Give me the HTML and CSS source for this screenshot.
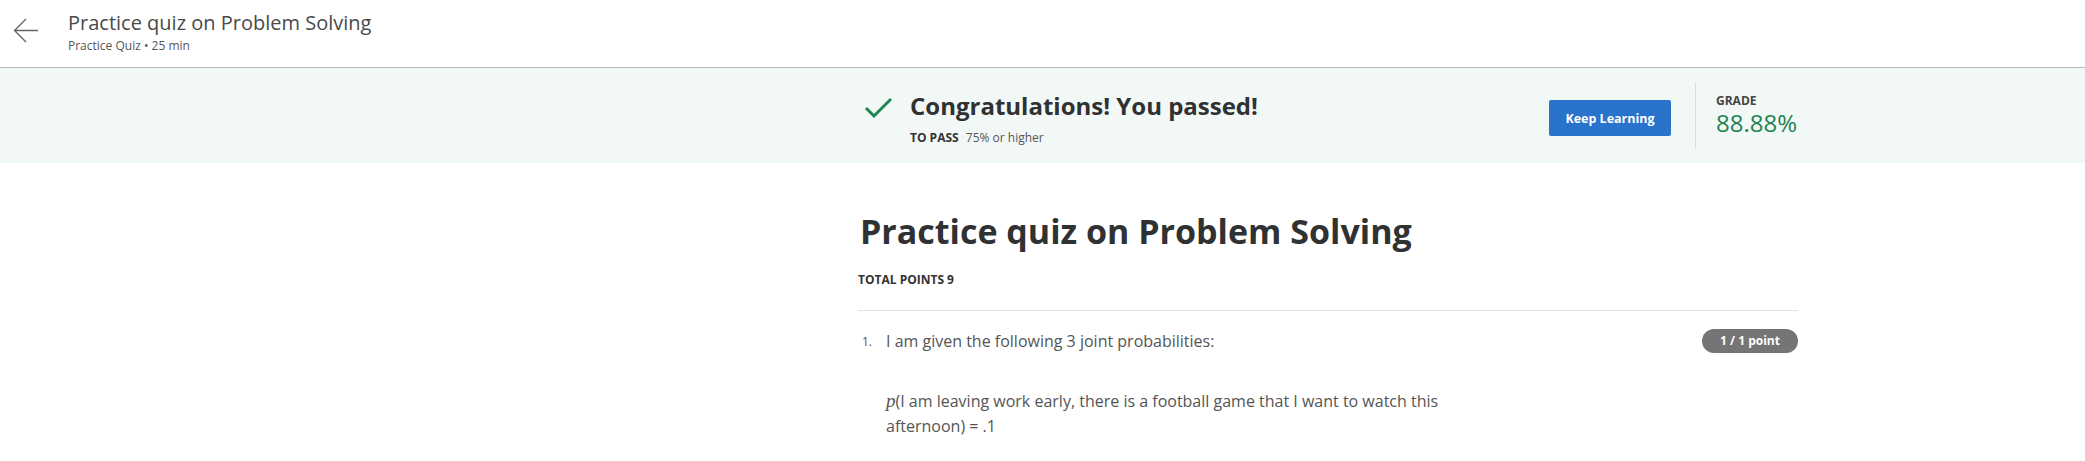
FILE: index.html
```html
<!DOCTYPE html>
<html>
<head>
<meta charset="utf-8">
<link rel="stylesheet" href="styles.css">
</head>
<body>
<header class="topbar">
  <svg class="back" width="26" height="25" viewBox="0 0 26 25"><path d="M13 1 L1.5 12.5 L13 24 M1.5 12.5 H25"/></svg>
  <div class="topbar-text">
    <div class="topbar-title">Practice quiz on Problem Solving</div>
    <div class="topbar-sub">Practice Quiz • 25 min</div>
  </div>
</header>
<section class="banner">
  <div class="banner-inner">
    <svg class="check" width="34" height="24" viewBox="0 0 34 24"><path d="M8 12 L16 20 L33 3"/></svg>
    <div class="banner-msg">
      <div class="banner-title">Congratulations! You passed!</div>
      <div class="banner-pass"><b>TO PASS</b> 75% or higher</div>
    </div>
    <div class="spacer"></div>
    <button class="btn">Keep Learning</button>
    <div class="vdiv"></div>
    <div class="grade">
      <div class="grade-label">GRADE</div>
      <div class="grade-value">88.88%</div>
    </div>
  </div>
</section>
<main class="content">
  <h1 class="quiz-title">Practice quiz on Problem Solving</h1>
  <div class="total">TOTAL POINTS 9</div>
  <div class="question">
    <div class="q-head">
      <span class="q-num">1.</span>
      <span class="q-text">I am given the following 3 joint probabilities:</span>
      <span class="badge">1 / 1 point</span>
    </div>
    <p class="q-body"><span class="math">p</span>(I am leaving work early, there is a football game that I want to watch this<br>afternoon) = .1</p>
  </div>
</main>
</body>
</html>
```
FILE: styles.css
```css
* { box-sizing: border-box; }
html, body { margin: 0; padding: 0; background: #fff; }
body { font-family: "Open Sans", sans-serif; color: #333; overflow: hidden; }

.topbar { height: 68px; border-bottom: 1px solid #b8b8b8; display: flex; align-items: flex-start; }
.back { margin: 18px 0 0 13px; fill: none; stroke: #666; stroke-width: 1.4; }
.topbar-text { margin: 8px 0 0 29px; }
.topbar-title { font-size: 20px; line-height: 30px; color: #4a4a4a; }
.topbar-sub { font-size: 12px; line-height: 16px; color: #555; }

.banner { height: 95px; background: #f2f8f6; }
.banner-inner { margin-left: 858px; width: 940px; height: 95px; display: flex; align-items: flex-start; }
.check { margin-top: 28px; fill: none; stroke: #1f8354; stroke-width: 3; }
.banner-msg { margin: 20px 0 0 18px; }
.banner-title { font-size: 24px; font-weight: 700; line-height: 36px; color: #2f3133; }
.banner-pass { font-size: 12px; line-height: 16px; color: #555; margin-top: 6px; }
.banner-pass b { color: #333; margin-right: 4px; }
.spacer { flex: 1; }
.btn { margin-top: 32px; width: 122px; height: 36px; border: 0; border-radius: 2px; background: #2a73cc; color: #fff; font-family: inherit; font-weight: 700; font-size: 12.5px; padding: 0; }
.vdiv { width: 1px; height: 67px; background: #dcdcdc; margin: 14px 20px 0 24px; }
.grade { width: 82px; margin-top: 25px; }
.grade-label { font-size: 12px; font-weight: 700; line-height: 16px; color: #444; }
.grade-value { font-size: 24px; line-height: 28px; color: #1f8354; }

.content { margin-left: 858px; width: 940px; }
.quiz-title { margin: 0 0 0 2px; padding-top: 44px; font-size: 34px; line-height: 48px; font-weight: 700; color: #2f3133; }
.total { font-size: 12px; font-weight: 700; line-height: 16px; margin-top: 17px; color: #333; }
.question { border-top: 1px solid #e0e0e0; margin-top: 22px; }
.q-head { display: flex; align-items: center; margin-top: 18px; }
.q-num { width: 28px; padding-left: 4px; font-size: 12px; color: #555; }
.q-text { flex: 1; font-size: 16px; color: #555; }
.badge { background: #757575; color: #fff; font-size: 12px; font-weight: 700; border-radius: 12px; width: 96px; height: 24px; line-height: 24px; text-align: center; }
.q-body { margin: 35px 0 0 28px; font-size: 16px; line-height: 25px; color: #555; }
.math { font-family: "Liberation Serif", serif; font-style: italic; font-size: 19px; }
```
